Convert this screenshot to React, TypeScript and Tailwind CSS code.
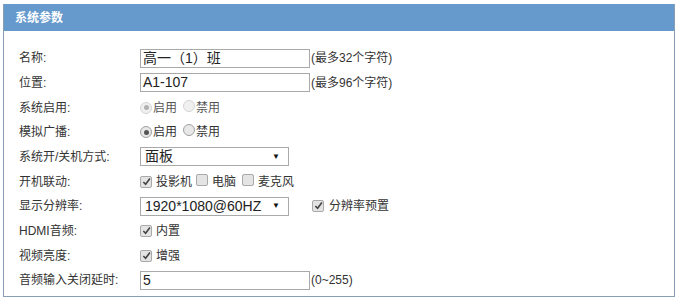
const font = "font-['Liberation_Sans','Noto_Sans_CJK_SC',sans-serif]";

function Check({ checked }: { checked: boolean }) {
  return (
    <span className="inline-flex w-[12px] h-[12px] items-center justify-center rounded-[2px] border border-[#a9a9a9] bg-[#e4e4e4] shrink-0">
      {checked && (
        <svg className="w-[9px] h-[9px]" viewBox="0 0 10 10">
          <path d="M1.5 5.5 L4 8 L8.8 1.8" fill="none" stroke="#444" strokeWidth={1.8} />
        </svg>
      )}
    </span>
  );
}

function Radio({ checked, disabled }: { checked: boolean; disabled?: boolean }) {
  return (
    <span
      className={`inline-flex w-[12px] h-[12px] items-center justify-center rounded-full border shrink-0 ${
        disabled ? "border-[#d4d4d4] bg-[#f0f0f0]" : "border-[#a0a0a0] bg-[#e8e8e8]"
      }`}
    >
      {checked && (
        <span className={`w-[5px] h-[5px] rounded-full ${disabled ? "bg-[#b0b0b0]" : "bg-[#555]"}`} />
      )}
    </span>
  );
}

function Select({ value }: { value: string }) {
  return (
    <div className="flex items-center justify-between w-[149px] h-[19px] border border-[#a9a9a9] bg-white pl-[4px] pr-[8px] text-[14px] text-[#222]">
      <span>{value}</span>
      <span className="text-[8px] text-[#111]">▼</span>
    </div>
  );
}

function TextInput({ value }: { value: string }) {
  return (
    <div className="flex items-center w-[170px] h-[19px] border border-[#a9a9a9] bg-white px-[2px] text-[14px] text-[#222]">
      {value}
    </div>
  );
}

function Row({ label, children }: { label: string; children: React.ReactNode }) {
  return (
    <div className="flex items-center h-[24.67px]">
      <div className="w-[121px] shrink-0">{label}</div>
      <div className="flex items-center">{children}</div>
    </div>
  );
}

export default function App() {
  return (
    <div className={`w-[678px] h-[304px] bg-white pt-[4px] pl-[3px] ${font}`}>
      <div className="w-[672px] border border-t-0 border-[#8a9fb6] bg-white">
        {/* Header */}
        <div className="h-[27px] bg-[#6699cc] flex items-center pl-[11px] text-[12px] font-bold text-white">
          系统参数
        </div>

        {/* Form */}
        <div className="pl-[15px] pt-[15px] pb-[3px] text-[12px] text-[#333]">
          <Row label="名称:">
            <TextInput value="高一（1）班" />
            <span className="ml-[1px]">(最多32个字符)</span>
          </Row>
          <Row label="位置:">
            <TextInput value="A1-107" />
            <span className="ml-[1px]">(最多96个字符)</span>
          </Row>
          <Row label="系统启用:">
            <Radio checked disabled />
            <span className="ml-[1px] text-[#555]">启用</span>
            <span className="ml-[6px]"><Radio checked={false} disabled /></span>
            <span className="ml-[1px] text-[#555]">禁用</span>
          </Row>
          <Row label="模拟广播:">
            <Radio checked />
            <span className="ml-[1px]">启用</span>
            <span className="ml-[6px]"><Radio checked={false} /></span>
            <span className="ml-[1px]">禁用</span>
          </Row>
          <Row label="系统开/关机方式:">
            <Select value="面板" />
          </Row>
          <Row label="开机联动:">
            <Check checked />
            <span className="ml-[4px]">投影机</span>
            <span className="ml-[4px]"><Check checked={false} /></span>
            <span className="ml-[4px]">电脑</span>
            <span className="ml-[6px]"><Check checked={false} /></span>
            <span className="ml-[4px]">麦克风</span>
          </Row>
          <Row label="显示分辨率:">
            <Select value="1920*1080@60HZ" />
            <span className="ml-[23px]"><Check checked /></span>
            <span className="ml-[5px]">分辨率预置</span>
          </Row>
          <Row label="HDMI音频:">
            <Check checked />
            <span className="ml-[4px]">内置</span>
          </Row>
          <Row label="视频亮度:">
            <Check checked />
            <span className="ml-[4px]">增强</span>
          </Row>
          <Row label="音频输入关闭延时:">
            <TextInput value="5" />
            <span className="ml-[1px]">(0~255)</span>
          </Row>
        </div>
      </div>
    </div>
  );
}
